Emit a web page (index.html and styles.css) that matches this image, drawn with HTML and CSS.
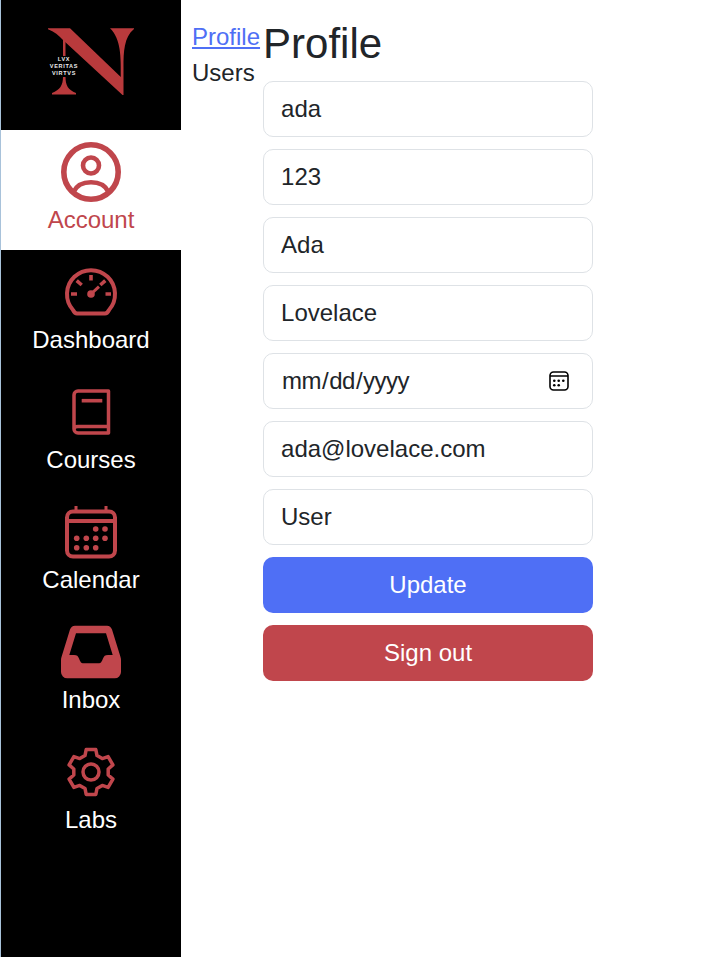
FILE: index.html
```html
<!DOCTYPE html>
<html lang="en">
<head>
    <meta charset="UTF-8">
    <meta name="viewport" content="width=device-width, initial-scale=1.0">
    <title>Profile</title>
    <link rel="stylesheet" href="styles.css">
</head>
<body>
    <nav class="sidebar">
        <a class="logo" href="#">
            <svg class="logo-mark" width="86" height="69" viewBox="0 0 86 69">
                <path class="logo-red" d="M0 1.3H22L72.8 50C73 30 73 12 62 1.3H86V2C76 10 75.5 25 75.5 40V68H74.5L15.5 13.5C11 8.5 6 4.5 0 2.3Z"/>
                <path class="logo-red" d="M15 12H17.5V29H15Z"/>
                <path class="logo-red" d="M15 50H17.5C17.5 58 20 63 28 66V67.5H4V66C12 63 15 58 15 50Z"/>
                <text class="logo-text" x="16" y="33.8">LVX</text>
                <text class="logo-text" x="16" y="41.3">VERITAS</text>
                <text class="logo-text" x="16" y="47.8">VIRTVS</text>
            </svg>
        </a>

        <a class="nav-item active" href="#">
            <svg class="icon" viewBox="0 0 60 60">
                <circle class="line" cx="30" cy="30" r="27.2" stroke-width="5.6"/>
                <circle class="line" cx="30" cy="23.5" r="8" stroke-width="4.6"/>
                <path class="line" stroke-width="4.6" d="M12.5 50C16 42.5 23 40.3 30 40.3C37 40.3 44 42.5 47.5 50"/>
            </svg>
            <span>Account</span>
        </a>

        <a class="nav-item" href="#">
            <svg class="icon" viewBox="0 0 60 60">
                <path class="line" stroke-width="4" d="M16 51.5H44C46 51.5 47 50 48 48A24 24 0 1 0 12 48C13 50 14 51.5 16 51.5Z"/>
                <path class="line" stroke-width="3.6" d="M30 13V18.5M10 32H16M44.5 32H50M15.7 18.7L20.7 23M44.3 18.7L39.3 23"/>
                <path class="line" stroke-width="3" d="M30 32L38 24.7"/>
                <circle class="solid" cx="30" cy="32" r="3.8"/>
            </svg>
            <span>Dashboard</span>
        </a>

        <a class="nav-item" href="#">
            <svg class="icon" viewBox="0 0 60 60">
                <path class="line" stroke-width="3.5" d="M47.5 9H17A4 4 0 0 0 13 13V47A4 4 0 0 0 17 51H47.5ZM13 47C13 45 15 44.5 17 44.5H47.5"/>
                <path class="line" stroke-width="3.6" d="M20.7 18.7H41.3"/>
            </svg>
            <span>Courses</span>
        </a>

        <a class="nav-item" href="#">
            <svg class="icon" viewBox="0 0 60 60">
                <rect class="line" stroke-width="4" x="6" y="9.5" width="48" height="45" rx="6"/>
                <path class="line" stroke-width="4" d="M6 19H54"/>
                <path class="line" stroke-width="3" d="M15 4V9M45 4V9"/>
                <g class="solid">
                    <circle cx="34.7" cy="27" r="2.8"/>
                    <circle cx="44" cy="27" r="2.8"/>
                    <circle cx="15.7" cy="36.3" r="2.8"/>
                    <circle cx="25.3" cy="36.3" r="2.8"/>
                    <circle cx="34.7" cy="36.3" r="2.8"/>
                    <circle cx="44" cy="36.3" r="2.8"/>
                    <circle cx="15.7" cy="45.7" r="2.8"/>
                    <circle cx="25.3" cy="45.7" r="2.8"/>
                    <circle cx="34.7" cy="45.7" r="2.8"/>
                </g>
            </svg>
            <span>Calendar</span>
        </a>

        <a class="nav-item" href="#">
            <svg class="icon" viewBox="0 0 60 60">
                <path class="solid" fill-rule="evenodd" d="M14 3.7H46C48.5 3.7 50 5 51 7.5L59.5 35C59.8 36 60 37 60 38V50A6.3 6.3 0 0 1 53.7 56.3H6.3A6.3 6.3 0 0 1 0 50V38C0 37 .2 36 .5 35L9 7.5C10 5 11.5 3.7 14 3.7ZM15 11.3L8.3 33H13C16 33 17 34 18 36.5C19.5 40 20 41.3 22.5 41.3H37.5C40 41.3 40.5 40 42 36.5C43 34 44 33 47 33H51.7L45 11.3Z"/>
            </svg>
            <span>Inbox</span>
        </a>

        <a class="nav-item" href="#">
            <svg class="icon" viewBox="0 0 60 60">
                <path class="line" stroke-width="3.5" d="M24 13.6L25.2 7.5H34.8L36 13.6L41.25 16.6L47.1 14.6L51.9 22.9L47.2 27V33L51.9 37.1L47.1 45.4L41.25 43.4L36 46.4L34.8 52.5H25.2L24 46.4L18.75 43.4L12.9 45.4L8.1 37.1L12.8 33V27L8.1 22.9L12.9 14.6L18.75 16.6Z"/>
                <circle class="line" stroke-width="3.5" cx="30" cy="30" r="8"/>
            </svg>
            <span>Labs</span>
        </a>
    </nav>

    <ul class="subnav">
        <li><a href="#">Profile</a></li>
        <li>Users</li>
    </ul>

    <main class="profile">
        <h1>Profile</h1>
        <form class="profile-form">
            <input type="text" value="ada">
            <input type="text" value="123">
            <input type="text" value="Ada">
            <input type="text" value="Lovelace">
            <input type="date">
            <input type="email" value="ada@lovelace.com">
            <input type="text" value="User">
            <button type="button" class="btn btn-update">Update</button>
            <button type="button" class="btn btn-signout">Sign out</button>
        </form>
    </main>
</body>
</html>
```

FILE: styles.css
```css
body {
    font-family: "Liberation Sans", Arial, sans-serif;
    font-size: 24px;
    line-height: 36px;
    color: #212529;
    margin: 0;
    display: flex;
    align-items: flex-start;
    min-height: 100vh;
}
a {
    text-decoration: none;
}

/* left navigation */
.sidebar {
    width: 180px;
    min-height: 100vh;
    flex-shrink: 0;
    background-color: #000;
    border-left: 1px solid #a8c2da;
}
.logo {
    display: flex;
    justify-content: center;
    height: 103px;
    padding-top: 27px;
}
.logo-red {
    fill: #b93a3c;
}
.logo-text {
    fill: #eee;
    font-size: 5.5px;
    font-weight: bold;
    letter-spacing: .7px;
    text-anchor: middle;
}
.nav-item {
    display: flex;
    flex-direction: column;
    align-items: center;
    height: 96px;
    padding: 12px 0;
    color: #fff;
}
.nav-item.active {
    background-color: #fff;
    color: #c0464c;
}
.icon {
    width: 60px;
    height: 60px;
}
.line {
    fill: none;
    stroke: #c0464c;
    stroke-linejoin: round;
}
.solid {
    fill: #c0464c;
}

/* section links */
.subnav {
    list-style: none;
    margin: 19px 3px 0 11px;
    padding: 0;
}
.subnav a {
    color: #4f6ff5;
    text-decoration: underline;
}

/* profile form */
.profile {
    width: 330px;
}
h1 {
    font-size: 42px;
    font-weight: normal;
    line-height: 50px;
    margin: 19px 0 12px;
}
.profile-form {
    display: flex;
    flex-direction: column;
    gap: 12px;
}
.profile-form input {
    box-sizing: border-box;
    width: 100%;
    height: 56px;
    padding: 9px 17px;
    font-family: inherit;
    font-size: 24px;
    line-height: 36px;
    color: #212529;
    background-color: #fff;
    border: 1px solid #dee2e6;
    border-radius: 10px;
}
.profile-form input::-webkit-datetime-edit {
    letter-spacing: -.5px;
}
.profile-form input::-webkit-calendar-picker-indicator {
    width: 20px;
    height: 20px;
    padding: 0;
    margin: 0 6px 0 0;
    background-image: url("data:image/svg+xml,%3Csvg xmlns='http://www.w3.org/2000/svg' viewBox='0 0 20 20'%3E%3Crect x='1' y='1' width='18' height='18' rx='3.5' fill='none' stroke='black' stroke-width='1.6'/%3E%3Cpath d='M1 5H19' stroke='black' stroke-width='1.3'/%3E%3Cg fill='black'%3E%3Ccircle cx='5.3' cy='9.7' r='1.3'/%3E%3Ccircle cx='9.7' cy='9.7' r='1.3'/%3E%3Ccircle cx='14.3' cy='9.7' r='1.3'/%3E%3Ccircle cx='5.3' cy='14.3' r='1.3'/%3E%3Ccircle cx='9.7' cy='14.3' r='1.3'/%3E%3C/g%3E%3C/svg%3E");
}
.btn {
    height: 56px;
    font-family: inherit;
    font-size: 24px;
    color: #fff;
    border: none;
    border-radius: 10px;
    cursor: pointer;
}
.btn-update {
    background-color: #4f6ff5;
}
.btn-signout {
    background-color: #c0464c;
}
```
